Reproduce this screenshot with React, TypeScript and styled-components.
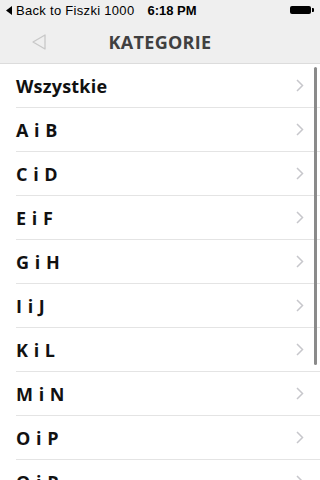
import { FC } from 'react'
import styled, { createGlobalStyle } from 'styled-components'


const GlobalStyle = createGlobalStyle`
  html, body {
    margin: 0;
    padding: 0;
    background: #ffffff;
  }
  body {
    font-family: 'Open Sans', 'Liberation Sans', sans-serif;
    overflow: hidden;
  }
`

const Screen = styled.div`
  width: 320px;
  height: 480px;
  display: flex;
  flex-direction: column;
  overflow: hidden;
  position: relative;
`

// status bar

const StatusBar = styled.div`
  height: 20px;
  flex-shrink: 0;
  background: #efefef;
  display: flex;
  align-items: center;
  padding: 0 6px 0 6px;
  font-family: 'Liberation Sans', Arial, sans-serif;
  font-size: 13px;
  color: #000;
  white-space: nowrap;
`

const BackApp = styled.div`
  display: flex;
  align-items: center;
  gap: 4px;
  margin-right: 13px;
  flex-shrink: 0;
  font-size: 13px;
  letter-spacing: 0.3px;
`

const Time = styled.div`
  font-weight: bold;
  flex: 1;
`

const Battery = styled.div`
  width: 21px;
  height: 8px;
  background: #000;
  border-radius: 2px;
  position: relative;
  margin-right: 3px;
  &:after {
    content: '';
    position: absolute;
    right: -3px;
    top: 2px;
    width: 2px;
    height: 4px;
    background: #000;
    border-radius: 0 1px 1px 0;
  }
`

// nav bar

const NavBar = styled.div`
  height: 43px;
  flex-shrink: 0;
  background: #efefef;
  border-bottom: 1px solid #dcdcdc;
  display: grid;
  grid-template-columns: 60px 1fr 60px;
  align-items: center;
`

const NavBack = styled.div`
  padding-left: 32px;
  display: flex;
  align-items: center;
`

const Title = styled.div`
  text-align: center;
  font-weight: 700;
  font-size: 18px;
  color: #404040;
  letter-spacing: 0.3px;
`

// list

const List = styled.div`
  flex: 1;
  position: relative;
`

const Row = styled.div`
  height: 44px;
  margin-left: 16px;
  padding-right: 16px;
  border-bottom: 1px solid #e4e4e4;
  box-sizing: border-box;
  display: flex;
  align-items: center;
  justify-content: space-between;
`

const Label = styled.div<{ spaced: boolean }>`
  font-weight: 700;
  font-size: 18px;
  color: #111;
  letter-spacing: ${(p) => (p.spaced ? '2px' : '0.2px')};
  word-spacing: ${(p) => (p.spaced ? '-3px' : '0')};
`

const ScrollBar = styled.div`
  position: absolute;
  right: 3px;
  top: 3px;
  width: 3px;
  height: 298px;
  border-radius: 2px;
  background: #8a8a8a;
`


const Chevron: FC = () => (
  <svg width='8' height='13' viewBox='0 0 8 13'>
    <path d='M1 1 L6.5 6.5 L1 12' fill='none' stroke='#c7c7cc' strokeWidth='1.5' />
  </svg>
)


const categories: string[] = [
  'Wszystkie',
  'A i B',
  'C i D',
  'E i F',
  'G i H',
  'I i J',
  'K i L',
  'M i N',
  'O i P',
  'Q i R',
]


const App: FC = () => {

  return (
    <Screen>
      <GlobalStyle />

      <StatusBar>
        <BackApp>
          <svg width='6' height='9' viewBox='0 0 6 9'>
            <path d='M6 0 L0 4.5 L6 9 Z' fill='#000' />
          </svg>
          <span>Back to Fiszki 1000</span>
        </BackApp>
        <Time>6:18 PM</Time>
        <Battery />
      </StatusBar>

      <NavBar>
        <NavBack>
          <svg width='14' height='16' viewBox='0 0 14 16'>
            <path d='M13 1 L1 8 L13 15 Z' fill='none' stroke='#c8c8c8' strokeWidth='1.3' strokeLinejoin='round' />
          </svg>
        </NavBack>
        <Title>KATEGORIE</Title>
        <div />
      </NavBar>

      <List>
        {categories.map((c, index) => {
          return (
            <Row key={index}>
              <Label spaced={index > 0}>{c}</Label>
              <Chevron />
            </Row>
          )
        })}
        <ScrollBar />
      </List>
    </Screen>
  )
}

export default App
